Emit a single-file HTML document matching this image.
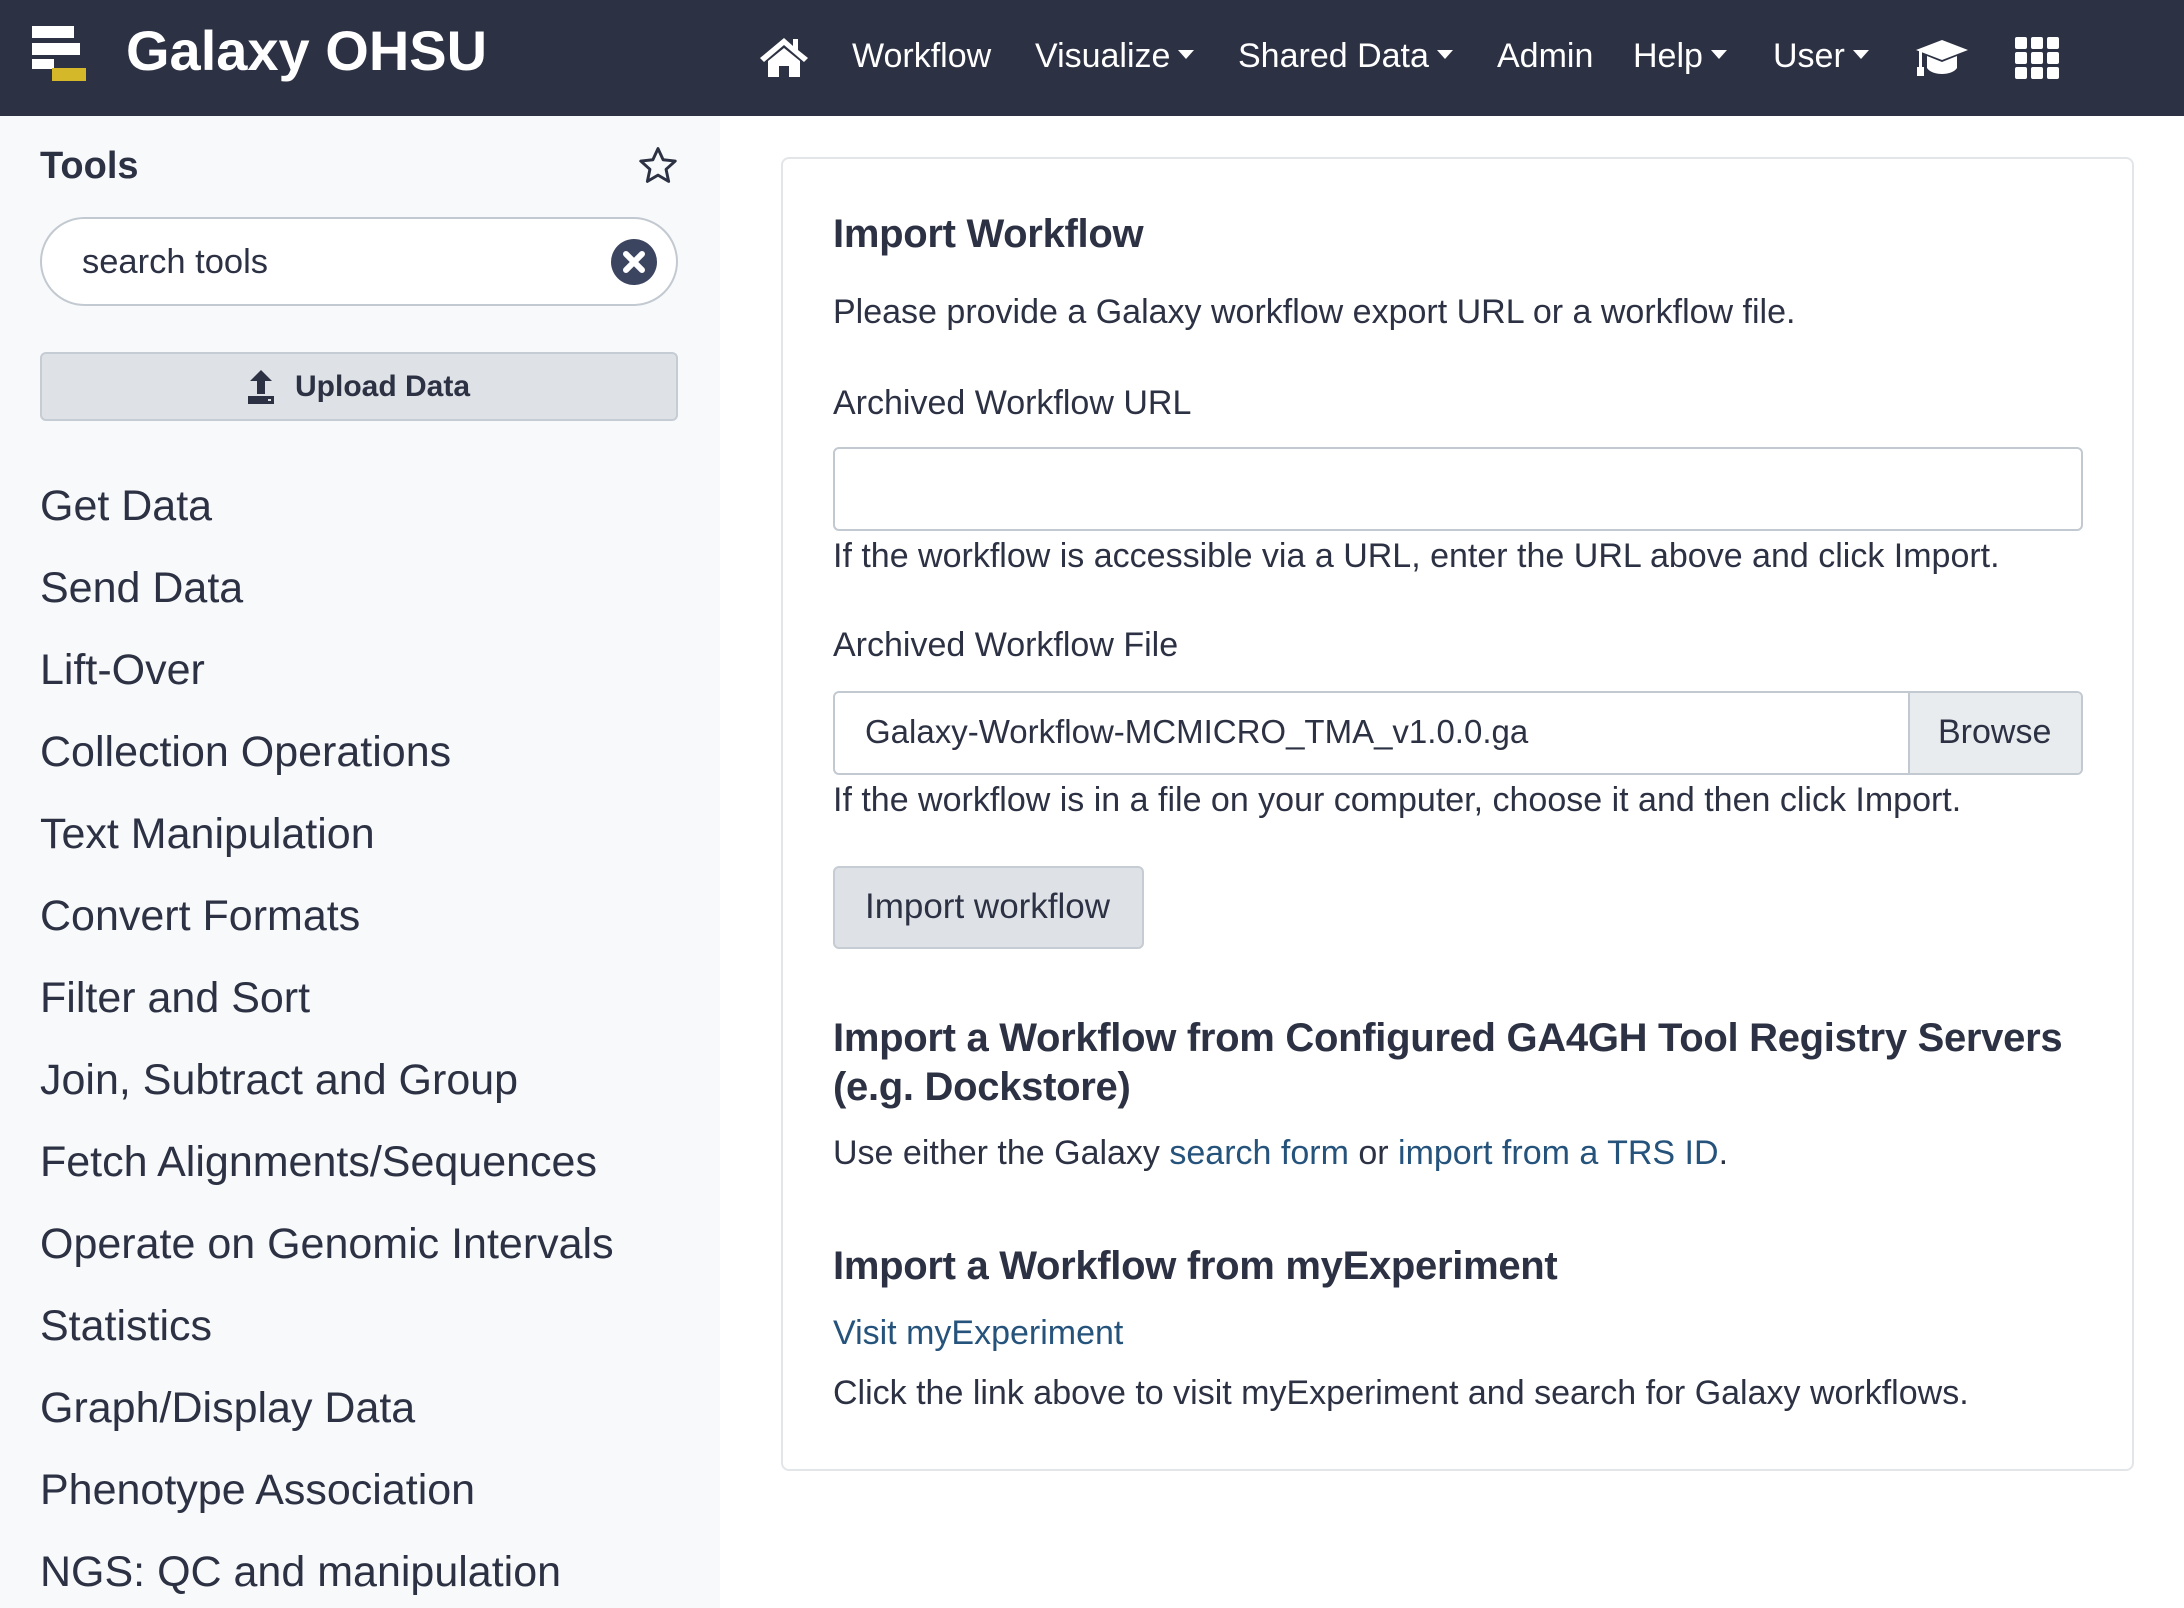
<!DOCTYPE html>
<html><head><meta charset="utf-8"><style>
*{box-sizing:border-box;margin:0;padding:0}
body{width:2184px;height:1608px;overflow:hidden;background:#fff;font-family:"Liberation Sans",sans-serif;color:#2c3143;position:relative}
.a{position:absolute;white-space:nowrap}
#hdr{position:absolute;left:0;top:0;width:2184px;height:116px;background:#2c3143}
.nav{position:absolute;top:34px;line-height:44px;font-size:34px;color:#fff}
.car{display:inline-block;width:0;height:0;border-left:8px solid transparent;border-right:8px solid transparent;border-top:9px solid #fff;vertical-align:middle;margin-left:8px;position:relative;top:-4px}
#side{position:absolute;left:0;top:116px;width:720px;height:1492px;background:#f8f9fa}
.cat{position:absolute;left:40px;font-size:43px;line-height:50px;color:#2c3143;white-space:nowrap}
.t{position:absolute;left:833px;font-size:34px;line-height:44px;white-space:nowrap}
.h{position:absolute;left:833px;font-size:40px;font-weight:bold;line-height:50px;white-space:nowrap;letter-spacing:-0.3px}
a{color:#25537b;text-decoration:none}
</style></head><body>
<div id="hdr">
 <svg class="a" style="left:32px;top:26px" width="66" height="58" viewBox="0 0 66 58">
  <rect x="0" y="0" width="42" height="12" fill="#fff"/>
  <rect x="0" y="17" width="48" height="12" fill="#fff"/>
  <rect x="0" y="33" width="22" height="10" fill="#fff"/>
  <rect x="20" y="42" width="34" height="13" fill="#d4b82a"/>
 </svg>
 <div class="a" style="left:126px;top:18px;font-size:56px;font-weight:bold;color:#fff;line-height:66px">Galaxy OHSU</div>
 <svg class="a" style="left:758px;top:34px" width="52" height="44" viewBox="0 0 52 44">
  <path d="M26 4 L2 24 L6 28 L26 11 L46 28 L50 24 L40 16 V5 H35 V12 Z" fill="#fff"/>
  <path d="M10 27 V43 H21 V32 H31 V43 H42 V27 L26 14 Z" fill="#fff"/>
 </svg>
 <div class="nav" style="left:852px">Workflow</div>
 <div class="nav" style="left:1035px">Visualize<span class="car"></span></div>
 <div class="nav" style="left:1238px">Shared Data<span class="car"></span></div>
 <div class="nav" style="left:1497px">Admin</div>
 <div class="nav" style="left:1633px">Help<span class="car"></span></div>
 <div class="nav" style="left:1773px">User<span class="car"></span></div>
 <svg class="a" style="left:1914px;top:38px" width="56" height="40" viewBox="0 0 56 40">
  <path d="M28 2 L54 12 L28 22 L2 12 Z" fill="#fff"/>
  <path d="M13 18 V30 C18 38 38 38 43 30 V18 L28 24 Z" fill="#fff"/>
  <rect x="5" y="13" width="3" height="18" fill="#fff"/><rect x="3" y="29" width="7" height="9" fill="#fff"/>
 </svg>
 <svg class="a" style="left:2015px;top:37px" width="44" height="42" viewBox="0 0 44 42">
  <g fill="#fff"><rect x="0" y="0" width="12" height="12" rx="2"/><rect x="16" y="0" width="12" height="12" rx="2"/><rect x="32" y="0" width="12" height="12" rx="2"/>
  <rect x="0" y="15" width="12" height="12" rx="2"/><rect x="16" y="15" width="12" height="12" rx="2"/><rect x="32" y="15" width="12" height="12" rx="2"/>
  <rect x="0" y="30" width="12" height="12" rx="2"/><rect x="16" y="30" width="12" height="12" rx="2"/><rect x="32" y="30" width="12" height="12" rx="2"/></g>
 </svg>
</div>
<div id="side"></div>
<div class="a" style="left:40px;top:142px;font-size:38px;font-weight:bold;line-height:48px">Tools</div>
<svg class="a" style="left:636px;top:144px" width="44" height="44" viewBox="0 0 24 24"><path d="M12 2.5 L14.8 8.6 L21.4 9.3 L16.4 13.8 L17.8 20.4 L12 17 L6.2 20.4 L7.6 13.8 L2.6 9.3 L9.2 8.6 Z" fill="none" stroke="#2c3143" stroke-width="1.6" stroke-linejoin="round"/></svg>
<div class="a" style="left:40px;top:217px;width:638px;height:89px;border:2px solid #c3c9d1;border-radius:45px;background:#fff"></div>
<div class="a" style="left:82px;top:240px;font-size:34.5px;line-height:44px;color:#2c3143">search tools</div>
<svg class="a" style="left:610px;top:238px" width="48" height="48" viewBox="0 0 48 48"><circle cx="24" cy="24" r="23" fill="#3c4560"/><path d="M16 16 L32 32 M32 16 L16 32" stroke="#fff" stroke-width="6" stroke-linecap="round"/></svg>
<div class="a" style="left:40px;top:352px;width:638px;height:69px;background:#dee2e6;border:2px solid #c6ccd3;border-radius:6px"></div>
<svg class="a" style="left:246px;top:370px" width="30" height="34" viewBox="0 0 30 34"><path d="M15 0 L26 11 H19 V24 H11 V11 H4 Z" fill="#2c3143"/><rect x="2" y="26" width="26" height="8" fill="#2c3143"/><rect x="22" y="29" width="3" height="2" fill="#dee2e6"/></svg>
<div class="a" style="left:295px;top:366px;font-size:30px;font-weight:bold;line-height:42px">Upload Data</div>
<div class="cat" style="top:481px">Get Data</div>
<div class="cat" style="top:563px">Send Data</div>
<div class="cat" style="top:645px">Lift-Over</div>
<div class="cat" style="top:727px">Collection Operations</div>
<div class="cat" style="top:809px">Text Manipulation</div>
<div class="cat" style="top:891px">Convert Formats</div>
<div class="cat" style="top:973px">Filter and Sort</div>
<div class="cat" style="top:1055px">Join, Subtract and Group</div>
<div class="cat" style="top:1137px">Fetch Alignments/Sequences</div>
<div class="cat" style="top:1219px">Operate on Genomic Intervals</div>
<div class="cat" style="top:1301px">Statistics</div>
<div class="cat" style="top:1383px">Graph/Display Data</div>
<div class="cat" style="top:1465px">Phenotype Association</div>
<div class="cat" style="top:1547px">NGS: QC and manipulation</div>

<div class="a" style="left:781px;top:157px;width:1353px;height:1314px;border:2px solid #e3e6e9;border-radius:8px"></div>
<div class="h" style="top:209px">Import Workflow</div>
<div class="t" style="top:290px">Please provide a Galaxy workflow export URL or a workflow file.</div>
<div class="t" style="top:381px">Archived Workflow URL</div>
<div class="a" style="left:833px;top:447px;width:1250px;height:84px;border:2px solid #c3c9d1;border-radius:6px"></div>
<div class="t" style="top:534px">If the workflow is accessible via a URL, enter the URL above and click Import.</div>
<div class="t" style="top:623px">Archived Workflow File</div>
<div class="a" style="left:833px;top:691px;width:1250px;height:84px;border:2px solid #c3c9d1;border-radius:6px;overflow:hidden">
 <div class="a" style="left:1073px;top:0;width:175px;height:80px;background:#e9ecef;border-left:2px solid #c3c9d1"></div>
</div>
<div class="t" style="left:865px;top:710px;font-size:33px">Galaxy-Workflow-MCMICRO_TMA_v1.0.0.ga</div>
<div class="t" style="left:1938px;top:710px">Browse</div>
<div class="t" style="top:778px">If the workflow is in a file on your computer, choose it and then click Import.</div>
<div class="a" style="left:833px;top:866px;width:311px;height:83px;background:#dee2e6;border:2px solid #c6ccd3;border-radius:6px"></div>
<div class="t" style="left:865px;top:885px;font-size:35px">Import workflow</div>
<div class="h" style="top:1013px">Import a Workflow from Configured GA4GH Tool Registry Servers</div>
<div class="h" style="top:1062px">(e.g. Dockstore)</div>
<div class="t" style="top:1131px">Use either the Galaxy <a>search form</a> or <a>import from a TRS ID</a>.</div>
<div class="h" style="top:1241px">Import a Workflow from myExperiment</div>
<div class="t" style="top:1311px"><a>Visit myExperiment</a></div>
<div class="t" style="top:1371px">Click the link above to visit myExperiment and search for Galaxy workflows.</div>
</body></html>
